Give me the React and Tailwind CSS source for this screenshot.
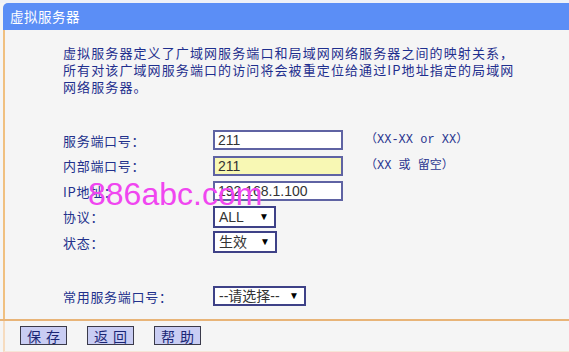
import React from "react";

const cjk = { fontFamily: '"Noto Sans CJK SC", "Liberation Sans", sans-serif' };

function Row({ label, children, hint }) {
  return (
    <div className="flex items-center h-[25.5px]">
      <div className="w-[150px] text-[13px] tracking-[0.7px] text-[#22318c] whitespace-nowrap leading-none">{label}</div>
      <div className="w-[152px] flex items-center">{children}</div>
      {hint}
    </div>
  );
}

function TextBox({ value, yellow }) {
  return (
    <div
      className={`w-[130px] h-[20px] border-2 border-[#5f63a3] flex items-center pl-[3px] text-[14px] text-[#333] leading-none ${yellow ? "bg-[#f8f8b4]" : "bg-white"}`}
      style={{ fontFamily: '"Liberation Sans", Arial, sans-serif' }}
    >
      {value}
    </div>
  );
}

function Select({ value, w, h = "h-[21px]" }) {
  return (
    <div
      className={`${w} ${h} border-2 border-[#3e4187] bg-white flex items-center justify-between pl-[4px] pr-[5px] text-[14px] text-[#333] leading-none`}
      style={{ fontFamily: '"Liberation Sans", "Noto Sans CJK SC", sans-serif' }}
    >
      <span>{value}</span>
      <span className="text-[10px] text-black">▼</span>
    </div>
  );
}

function Btn({ children }) {
  return (
    <div
      className="w-[47px] h-[19px] bg-[#c9cdf3] border border-[#3a3a4a] flex items-center justify-center text-[14px] tracking-[5px] pl-[5px] text-[#1b2675] leading-none"
      style={cjk}
    >
      {children}
    </div>
  );
}

export default function App() {
  return (
    <div className="relative w-[569px] h-[352px] bg-[#f5f5f5] overflow-hidden" style={cjk}>
      <div className="h-[3px] bg-[#eef1f8]" />
      <div className="ml-[3px] h-[27px] bg-[#5b8ef6] rounded-tl-[5px] pl-[7px] flex items-center text-white text-[13.5px] tracking-[0.5px] leading-none">
        虚拟服务器
      </div>
      <div className="ml-[3px] h-[289px] border-l-2 border-[#f0c080] pl-[58px] pt-[13.5px]">
        <div className="text-[13px] tracking-[1.1px] leading-[17px] text-[#1f2f8e] whitespace-nowrap">
          虚拟服务器定义了广域网服务端口和局域网网络服务器之间的映射关系，
          <br />
          所有对该广域网服务端口的访问将会被重定位给通过IP地址指定的局域网
          <br />
          网络服务器。
        </div>
        <div className="mt-[32.75px]">
          <Row
            label="服务端口号："
            hint={
              <div className="text-[12px] text-[#2a3690] whitespace-nowrap" style={{ fontFamily: '"Liberation Mono", "Noto Sans CJK SC", monospace' }}>
                （XX-XX or XX）
              </div>
            }
          >
            <TextBox value="211" />
          </Row>
          <Row
            label="内部端口号："
            hint={
              <div className="text-[12px] text-[#2a3690] whitespace-nowrap" style={{ fontFamily: '"Liberation Mono", "Noto Sans CJK SC", monospace' }}>
                （XX 或 留空）
              </div>
            }
          >
            <TextBox value="211" yellow />
          </Row>
          <Row label="IP地址：">
            <TextBox value="192.168.1.100" />
          </Row>
          <Row label="协议：">
            <Select value="ALL" w="w-[63px]" h="h-[22px]" />
          </Row>
          <Row label="状态：">
            <Select value="生效" w="w-[64px]" h="h-[22px]" />
          </Row>
          <div className="mt-[28.5px]">
            <Row label="常用服务端口号：">
              <Select value="--请选择--" w="w-[93px]" h="h-[20px]" />
            </Row>
          </div>
        </div>
      </div>
      <div className="h-[2px] bg-[#e8b478]" />
      <div className="ml-[3px] border-l-2 border-[#f6dcc0] h-[31px] pl-[15px] pt-[5px] flex gap-[20px] items-start border-b border-b-[#f6e6d8]">
        <Btn>保存</Btn>
        <Btn>返回</Btn>
        <Btn>帮助</Btn>
      </div>
      <div
        className="absolute left-[88px] top-[178px] text-[32px] leading-[32px] text-[#f046f0] whitespace-nowrap"
        style={{ fontFamily: '"Liberation Sans", Arial, sans-serif' }}
      >
        886abc.com
      </div>
    </div>
  );
}
